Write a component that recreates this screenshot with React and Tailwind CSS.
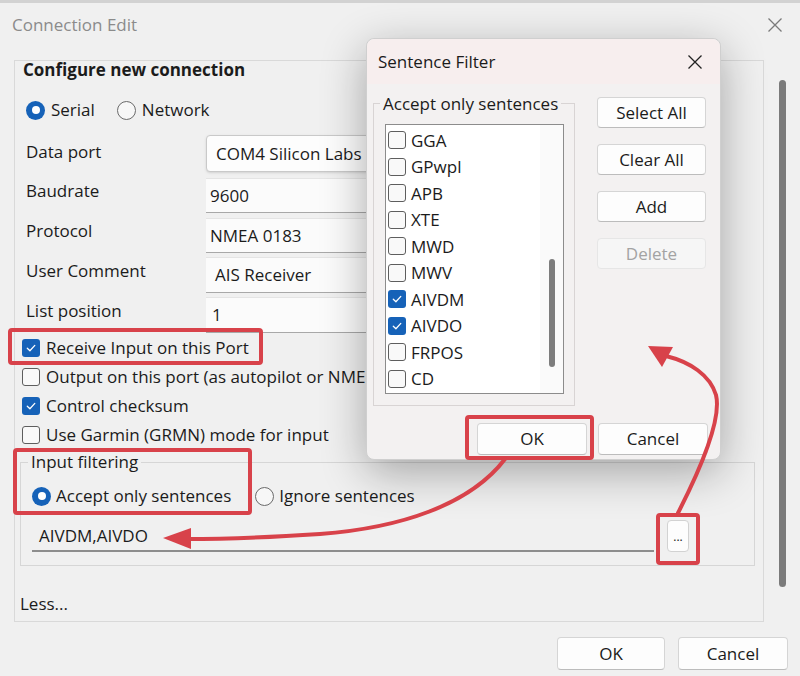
import React from "react";

function CheckBox({ checked }) {
  if (checked)
    return (
      <span className="flex h-[18px] w-[18px] shrink-0 items-center justify-center rounded-[3px] bg-[#1662b8]">
        <svg width="12" height="12" viewBox="0 0 12 12">
          <path d="M2.3 6.3 L4.9 8.7 L9.8 3.4" fill="none" stroke="#fff" strokeWidth="1.3" strokeLinecap="round" strokeLinejoin="round" />
        </svg>
      </span>
    );
  return <span className="h-[18px] w-[18px] shrink-0 rounded-[3px] border border-[#5e5e5e] bg-[#f9f9f9]" />;
}

function Radio({ checked }) {
  if (checked)
    return (
      <span className="flex h-[19px] w-[19px] shrink-0 items-center justify-center rounded-full bg-[#1662b8]">
        <span className="h-[8px] w-[8px] rounded-full bg-white" />
      </span>
    );
  return <span className="h-[19px] w-[19px] shrink-0 rounded-full border border-[#6a6a6a] bg-[#f7f7f7]" />;
}

function XIcon({ color, size = 16 }) {
  return (
    <svg width={size} height={size} viewBox="0 0 16 16">
      <path d="M1.5 1.5 L14.5 14.5 M14.5 1.5 L1.5 14.5" stroke={color} strokeWidth="1.3" fill="none" />
    </svg>
  );
}

function Btn({ children, className = "", disabled = false }) {
  return (
    <div
      className={
        "flex items-center justify-center rounded-[4px] border " +
        (disabled
          ? "border-[#e6e6e6] bg-[#f6f6f6] text-[#a3a3a3] "
          : "border-[#d5d5d5] border-b-[#bcbcbc] bg-[#fdfdfd] text-[#1b1b1b] ") +
        className
      }
    >
      {children}
    </div>
  );
}

const sentences = [
  ["GGA", false],
  ["GPwpl", false],
  ["APB", false],
  ["XTE", false],
  ["MWD", false],
  ["MWV", false],
  ["AIVDM", true],
  ["AIVDO", true],
  ["FRPOS", false],
  ["CD", false],
];

const inputCls =
  "flex h-full w-[162px] items-center overflow-hidden whitespace-nowrap border-t border-b border-t-[#e4e4e4] border-b-[#a8a8a8] bg-[#fbfbfb]";

export default function App() {
  return (
    <div className="relative h-[676px] w-[800px] overflow-hidden bg-[#f0f0f0] font-['Open_Sans',sans-serif] text-[17px] text-[#1b1b1b]">
      <div className="h-[3px] bg-[#d2d2d2]" />
      {/* title bar */}
      <div className="flex h-[44px] items-center justify-between pl-[12px] pr-[17px]">
        <span className="text-[#8b8b8b]">Connection Edit</span>
        <XIcon color="#7a7a7a" />
      </div>

      <div className="mt-[13px] flex">
        <div className="ml-[14px] flex h-[562px] w-[750px] flex-col border border-[#d9d9d9]">
          <div className="flex h-[18px] items-center pl-[8px] font-bold">Configure new connection</div>

          <div className="mt-[21px] flex h-[20px] items-center pl-[11px]">
            <div className="flex items-center gap-[6px]">
              <Radio checked />
              <span>Serial</span>
            </div>
            <div className="ml-[22px] flex items-center gap-[6px]">
              <Radio />
              <span>Network</span>
            </div>
          </div>

          <div className="mt-[13px] grid grid-cols-[191px_1fr]">
            <div className="h-[40px] pl-[11px] pt-[9px] leading-[20px]">Data port</div>
            <div className="h-[40px] pt-[2px]">
              <div className="flex h-[37px] w-[162px] items-center overflow-hidden whitespace-nowrap rounded-l-[4px] border border-[#c9c9c9] bg-[#fdfdfd] pl-[9px] shadow-sm">
                COM4 Silicon Labs
              </div>
            </div>
            <div className="h-[40px] pl-[11px] pt-[8px] leading-[20px]">Baudrate</div>
            <div className="h-[40px] pt-[5px]">
              <div className={inputCls + " pl-[4px]"}>9600</div>
            </div>
            <div className="h-[40px] pl-[11px] pt-[8px] leading-[20px]">Protocol</div>
            <div className="h-[40px] pt-[5px]">
              <div className={inputCls + " pl-[4px]"}>NMEA 0183</div>
            </div>
            <div className="h-[40px] pl-[11px] pt-[8px] leading-[20px]">User Comment</div>
            <div className="h-[40px] pt-[4px]">
              <div className={inputCls + " pl-[9px]"}>AIS Receiver</div>
            </div>
            <div className="h-[40px] pl-[11px] pt-[8px] leading-[20px]">List position</div>
            <div className="h-[40px] pt-[4px]">
              <div className={inputCls + " pl-[6px]"}>1</div>
            </div>
          </div>

          <div className="flex flex-col">
            {[
              ["Receive Input on this Port", true],
              ["Output on this port (as autopilot or NME", false],
              ["Control checksum", true],
              ["Use Garmin (GRMN) mode for input", false],
            ].map(([t, c]) => (
              <div key={t} className="flex h-[29px] w-[351px] items-center gap-[6px] whitespace-nowrap pl-[7px]">
                <CheckBox checked={c} />
                <span>{t}</span>
              </div>
            ))}
          </div>

          <div className="ml-[5px] mt-[13px] flex h-[104px] w-[735px] flex-col border border-[#d6d6d6]">
            <div className="-mt-[12px] ml-[7px] h-[22px] w-fit bg-[#f0f0f0] px-[3px] leading-[22px]">Input filtering</div>
            <div className="mt-[13px] flex h-[20px] items-center pl-[11px]">
              <div className="flex items-center gap-[5px]">
                <Radio checked />
                <span>Accept only sentences</span>
              </div>
              <div className="ml-[24px] flex items-center gap-[5px]">
                <Radio />
                <span>Ignore sentences</span>
              </div>
            </div>
            <div className="mt-[14px] flex items-end pl-[11px]">
              <div className="flex h-[32px] w-[622px] items-center border-b-[2px] border-b-[#8d8d8d] pl-[7px] pt-[1px]">AIVDM,AIVDO</div>
              <div className="ml-[13px] flex h-[32px] w-[22px] items-end justify-center rounded-[4px] border border-[#d2d2d2] bg-[#fdfdfd] pb-[8px] text-[12px] leading-none">
                ...
              </div>
            </div>
          </div>

          <div className="mt-[28px] flex h-[20px] items-center pl-[5px]">Less...</div>
        </div>
        <div className="ml-[15px] mt-[20px] h-[507px] w-[7px] rounded-full bg-[#7b7b7b]" />
      </div>

      <div className="mt-[15px] flex justify-end gap-[13px] pr-[12px]">
        <Btn className="h-[33px] w-[108px]">OK</Btn>
        <Btn className="h-[33px] w-[110px]">Cancel</Btn>
      </div>

      {/* Sentence Filter dialog */}
      <div className="absolute left-[366px] top-[38px] flex h-[422px] w-[355px] flex-col rounded-[8px] border border-[#cfcfcf] bg-[#f3f1f1] shadow-[0_12px_45px_rgba(0,0,0,0.32)]">
        <div className="flex h-[45px] items-center justify-between rounded-t-[8px] bg-[#f7eeee] pl-[11px] pr-[17px]">
          <span>Sentence Filter</span>
          <XIcon color="#222" />
        </div>
        <div className="flex">
          <div className="ml-[6px] mt-[19px] flex h-[303px] w-[202px] flex-col border border-[#d8d4d4]">
            <div className="-mt-[11px] ml-[6px] h-[22px] w-fit bg-[#f3f1f1] px-[3px] leading-[22px]">Accept only sentences</div>
            <div className="ml-[11px] mt-[9px] flex h-[270px] w-[179px] border border-[#8c8c8c] bg-white">
              <div className="flex flex-1 flex-col pl-[2px] pt-[2px]">
                {sentences.map(([s, c]) => (
                  <div key={s} className="flex h-[26.5px] items-center gap-[5px]">
                    <CheckBox checked={c} />
                    <span>{s}</span>
                  </div>
                ))}
              </div>
              <div className="flex w-[23px] justify-center bg-[#fafafa]">
                <div className="mt-[134px] h-[108px] w-[6px] rounded-full bg-[#7d7d7d]" />
              </div>
            </div>
          </div>
          <div className="ml-[22px] mt-[13px] flex flex-col gap-[16px]">
            <Btn className="h-[31px] w-[109px]">Select All</Btn>
            <Btn className="h-[31px] w-[109px]">Clear All</Btn>
            <Btn className="h-[31px] w-[109px]">Add</Btn>
            <Btn className="h-[31px] w-[109px]" disabled>
              Delete
            </Btn>
          </div>
        </div>
        <div className="mt-[17px] flex justify-end gap-[11px] pr-[12px]">
          <Btn className="h-[32px] w-[110px]">OK</Btn>
          <Btn className="h-[32px] w-[110px]">Cancel</Btn>
        </div>
      </div>

      {/* annotations */}
      <div className="pointer-events-none absolute left-[8px] top-[328px] h-[37px] w-[255px] rounded-[4px] border-[4px] border-[#d8424a]" />
      <div className="pointer-events-none absolute left-[13px] top-[448px] h-[67px] w-[239px] rounded-[4px] border-[4px] border-[#d8424a]" />
      <div className="pointer-events-none absolute left-[465px] top-[415px] h-[45px] w-[129px] rounded-[4px] border-[4px] border-[#d8424a]" />
      <div className="pointer-events-none absolute left-[656px] top-[513px] h-[52px] w-[44px] rounded-[4px] border-[4px] border-[#d8424a]" />
      <svg className="pointer-events-none absolute left-0 top-0" width="800" height="676" viewBox="0 0 800 676">
        <path d="M505 459 C 470 505, 400 528, 320 534 C 260 538, 225 539, 186 539" fill="none" stroke="#d8424a" strokeWidth="4" strokeLinecap="round" />
        <polygon points="163,538 191,528 191,549" fill="#d8424a" />
        <path d="M678 513 C 700 470, 722 420, 716 395 C 710 375, 690 362, 666 356" fill="none" stroke="#d8424a" strokeWidth="4" strokeLinecap="round" />
        <polygon points="648,346 673,347 662,367" fill="#d8424a" />
      </svg>
    </div>
  );
}
